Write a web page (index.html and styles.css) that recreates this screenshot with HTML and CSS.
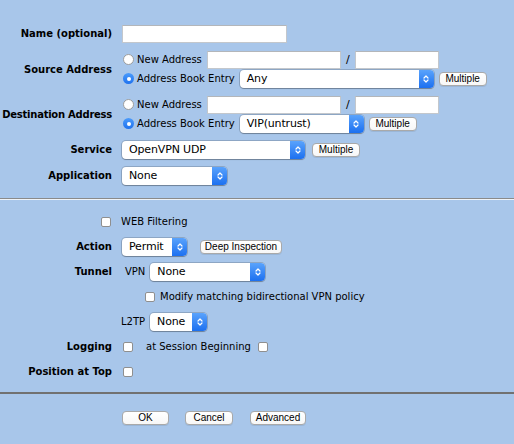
FILE: index.html
```html
<!DOCTYPE html>
<html>
<head>
<meta charset="utf-8">
<link rel="stylesheet" href="styles.css">
</head>
<body>
<form class="policy">
  <section class="sec sec-top">
    <div class="row">
      <div class="lbl">Name (optional)</div>
      <div class="val"><input class="txt w-name" type="text"></div>
    </div>
    <div class="row">
      <div class="lbl">Source Address</div>
      <div class="val stack">
        <div class="line">
          <span class="radio"></span><span class="rtext">New Address</span>
          <input class="txt w-addr after-text" type="text"><span class="slash">/</span><input class="txt w-mask" type="text">
        </div>
        <div class="line">
          <span class="radio on"></span><span class="rtext">Address Book Entry</span>
          <span class="sel w-any after-text"><span class="sel-text">Any</span><span class="sel-arrow"><svg width="8" height="12" viewBox="0 0 8 12"><path d="M2 5 L4 3 L6 5 M2 7 L4 9 L6 7" fill="none" stroke="#fff" stroke-width="1.2" stroke-linecap="round" stroke-linejoin="round"/></svg></span></span>
          <button type="button" class="btn w-mult after-sel">Multiple</button>
        </div>
      </div>
    </div>
    <div class="row">
      <div class="lbl lbl-tight">Destination Address</div>
      <div class="val stack">
        <div class="line">
          <span class="radio"></span><span class="rtext">New Address</span>
          <input class="txt w-addr after-text" type="text"><span class="slash">/</span><input class="txt w-mask" type="text">
        </div>
        <div class="line">
          <span class="radio on"></span><span class="rtext">Address Book Entry</span>
          <span class="sel w-vip after-text"><span class="sel-text">VIP(untrust)</span><span class="sel-arrow"><svg width="8" height="12" viewBox="0 0 8 12"><path d="M2 5 L4 3 L6 5 M2 7 L4 9 L6 7" fill="none" stroke="#fff" stroke-width="1.2" stroke-linecap="round" stroke-linejoin="round"/></svg></span></span>
          <button type="button" class="btn w-mult after-sel">Multiple</button>
        </div>
      </div>
    </div>
    <div class="row">
      <div class="lbl">Service</div>
      <div class="val">
        <span class="sel w-svc"><span class="sel-text">OpenVPN UDP</span><span class="sel-arrow"><svg width="8" height="12" viewBox="0 0 8 12"><path d="M2 5 L4 3 L6 5 M2 7 L4 9 L6 7" fill="none" stroke="#fff" stroke-width="1.2" stroke-linecap="round" stroke-linejoin="round"/></svg></span></span>
        <button type="button" class="btn w-mult after-svc">Multiple</button>
      </div>
    </div>
    <div class="row">
      <div class="lbl">Application</div>
      <div class="val">
        <span class="sel w-app"><span class="sel-text">None</span><span class="sel-arrow"><svg width="8" height="12" viewBox="0 0 8 12"><path d="M2 5 L4 3 L6 5 M2 7 L4 9 L6 7" fill="none" stroke="#fff" stroke-width="1.2" stroke-linecap="round" stroke-linejoin="round"/></svg></span></span>
      </div>
    </div>
  </section>

  <div class="divider-light"></div>

  <section class="sec sec-mid">
    <div class="row">
      <div class="lbl"><span class="check web-check"></span></div>
      <div class="val"><span class="plain">WEB Filtering</span></div>
    </div>
    <div class="row">
      <div class="lbl">Action</div>
      <div class="val">
        <span class="sel w-act"><span class="sel-text">Permit</span><span class="sel-arrow"><svg width="8" height="12" viewBox="0 0 8 12"><path d="M2 5 L4 3 L6 5 M2 7 L4 9 L6 7" fill="none" stroke="#fff" stroke-width="1.2" stroke-linecap="round" stroke-linejoin="round"/></svg></span></span>
        <button type="button" class="btn w-deep">Deep Inspection</button>
      </div>
    </div>
    <div class="row">
      <div class="lbl">Tunnel</div>
      <div class="val">
        <span class="plain vpn">VPN</span>
        <span class="sel w-vpn"><span class="sel-text">None</span><span class="sel-arrow"><svg width="8" height="12" viewBox="0 0 8 12"><path d="M2 5 L4 3 L6 5 M2 7 L4 9 L6 7" fill="none" stroke="#fff" stroke-width="1.2" stroke-linecap="round" stroke-linejoin="round"/></svg></span></span>
      </div>
    </div>
    <div class="row">
      <div class="lbl"></div>
      <div class="val">
        <span class="check modify-check"></span><span class="plain modify-text">Modify matching bidirectional VPN policy</span>
      </div>
    </div>
    <div class="row">
      <div class="lbl"></div>
      <div class="val">
        <span class="plain l2tp">L2TP</span>
        <span class="sel w-l2tp"><span class="sel-text">None</span><span class="sel-arrow"><svg width="8" height="12" viewBox="0 0 8 12"><path d="M2 5 L4 3 L6 5 M2 7 L4 9 L6 7" fill="none" stroke="#fff" stroke-width="1.2" stroke-linecap="round" stroke-linejoin="round"/></svg></span></span>
      </div>
    </div>
    <div class="row">
      <div class="lbl">Logging</div>
      <div class="val">
        <span class="check first-check"></span><span class="plain session">at Session Beginning</span><span class="check session-check"></span>
      </div>
    </div>
    <div class="row">
      <div class="lbl">Position at Top</div>
      <div class="val">
        <span class="check first-check"></span>
      </div>
    </div>
  </section>

  <div class="divider-dark"></div>

  <section class="sec sec-bot">
    <div class="row">
      <div class="lbl"></div>
      <div class="val actions">
        <button type="button" class="btn w-ok">OK</button>
        <button type="button" class="btn w-cancel">Cancel</button>
        <button type="button" class="btn w-adv">Advanced</button>
      </div>
    </div>
  </section>
</form>
</body>
</html>
```

FILE: styles.css
```css
* { box-sizing: border-box; }
html, body { margin: 0; padding: 0; }
body {
  background: #a8c6ea;
  font-family: "DejaVu Sans", Verdana, sans-serif;
  font-size: 10px;
  color: #000;
  width: 514px;
  height: 444px;
  overflow: hidden;
}
.policy { margin: 0; }
.sec { display: flex; flex-direction: column; }
.sec-top { padding: 24px 0 13px; row-gap: 7px; }
.sec-mid { padding: 12px 0 11px; row-gap: 6px; }
.sec-bot { padding: 14px 0 0; }

.divider-light {
  height: 2px;
  border-top: 1px solid #8a8a8a;
  border-bottom: 1px solid #eef3f9;
}
.divider-dark { height: 2px; background: #717171; }

.row {
  display: grid;
  grid-template-columns: 112px auto;
  column-gap: 10px;
  align-items: center;
}
.lbl {
  font-weight: bold;
  text-align: right;
  white-space: nowrap;
  justify-self: end;
  display: flex;
  align-items: center;
}
.lbl-tight { letter-spacing: -0.25px; }
.val { display: flex; align-items: center; height: 19px; white-space: nowrap; }
.stack { flex-direction: column; align-items: stretch; height: auto; }
.line { display: flex; align-items: center; height: 19px; }

/* text inputs */
.txt {
  appearance: none;
  -webkit-appearance: none;
  height: 18px;
  margin: 0;
  padding: 0;
  border: 1px solid #c3c7cc;
  border-top-color: #b3b6ba;
  background: #fff;
  border-radius: 0;
}
.w-name { width: 165px; }
.w-addr { width: 134px; }
.w-mask { width: 84px; }
.slash { width: 14px; text-align: center; font-size: 11px; }
.txt.after-text, .sel.after-text { margin-left: 5px; }

/* radios */
.radio {
  width: 11px; height: 11px;
  margin-left: 1px;
  border-radius: 50%;
  background: #fff;
  border: 1px solid #9d9d9d;
  flex: none;
  display: inline-flex;
  align-items: center;
  justify-content: center;
}
.radio.on {
  border: none;
  background: linear-gradient(#4b9bfb, #1f72ef);
}
.radio.on::after {
  content: "";
  width: 4px; height: 4px;
  border-radius: 50%;
  background: #fff;
}
.rtext { margin-left: 3px; }

/* plain texts and checkboxes */
.plain { margin-left: -1px; }
.check {
  width: 10px; height: 10px;
  border: 1px solid #8f8f8f;
  border-radius: 2px;
  background: #fff;
  flex: none;
  display: inline-block;
}
.check.web-check { margin-right: 1px; }
.check.first-check { margin-left: 1px; }
.check.modify-check { margin-left: 23px; }
.plain.modify-text { margin-left: 5px; }
.plain.session { margin-left: 13px; }
.check.session-check { margin-left: 7px; }
.plain.vpn { margin-left: 3px; margin-right: 5px; }
.plain.l2tp { margin-right: 5px; }

/* selects */
.sel {
  display: inline-flex;
  height: 18px;
  background: #fff;
  border-radius: 4px;
  box-shadow: 0 0 0 1px rgba(0, 0, 0, 0.16), 0 1px 1px rgba(0, 0, 0, 0.22);
  font-size: 11px;
  letter-spacing: -0.15px;
  align-items: center;
  overflow: hidden;
  flex: none;
}
.sel-text { flex: 1; padding-left: 7px; }
.sel-arrow {
  width: 15px;
  height: 100%;
  background: linear-gradient(#5aa3fc, #1c70f0);
  display: flex;
  align-items: center;
  justify-content: center;
}
.w-any { width: 194px; }
.w-vip { width: 124px; }
.w-svc { width: 183px; }
.w-app { width: 105px; }
.w-act { width: 65px; }
.w-vpn { width: 115px; }
.w-l2tp { width: 57px; }

/* buttons */
.btn {
  appearance: none;
  -webkit-appearance: none;
  height: 14px;
  margin: 0;
  padding: 0;
  border: 1px solid #a9a9a9;
  border-radius: 4px;
  background: linear-gradient(#ffffff, #f7f7f7);
  box-shadow: 0 1px 0 rgba(0, 0, 0, 0.08);
  font-family: "Liberation Sans", Arial, sans-serif;
  font-size: 10px;
  line-height: 12px;
  color: #000;
  flex: none;
}
.w-mult { width: 48px; }
.btn.after-sel { margin-left: 5px; }
.btn.after-svc { margin-left: 7px; }
.btn.w-deep { width: 82px; margin-left: 13px; }
.w-ok { width: 47px; }
.btn.w-cancel { width: 48px; margin-left: 16px; }
.btn.w-adv { width: 56px; margin-left: 17px; }
```
